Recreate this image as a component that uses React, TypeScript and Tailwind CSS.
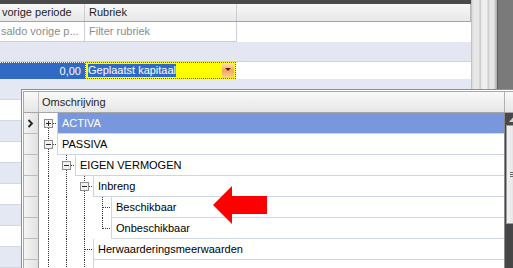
import React from 'react';

type Box = 'plus' | 'minus' | undefined;

interface TreeNode {
  label: string;
  guides: boolean[];
  box?: Box;
  first?: boolean;
  last?: boolean;
  selected?: boolean;
  current?: boolean;
}

const DOT = '#3a3a3a';

const nodes: TreeNode[] = [
  { label: 'ACTIVA', guides: [], box: 'plus', first: true, selected: true, current: true },
  { label: 'PASSIVA', guides: [], box: 'minus' },
  { label: 'EIGEN VERMOGEN', guides: [true], box: 'minus' },
  { label: 'Inbreng', guides: [true, true], box: 'minus' },
  { label: 'Beschikbaar', guides: [true, true, true] },
  { label: 'Onbeschikbaar', guides: [true, true, true], last: true },
  { label: 'Herwaarderingsmeerwaarden', guides: [true, true] },
  { label: '', guides: [true, true] },
];

const TreeCol: React.FC<{ up?: boolean; down?: boolean; right?: boolean; box?: Box }> = ({ up, down, right, box }) => (
  <svg width="18" height="21" className="block shrink-0">
    {up && <line x1="9.5" y1="0" x2="9.5" y2={box ? 6 : 11} stroke={DOT} strokeDasharray="1 1" />}
    {down && <line x1="9.5" y1={box ? 15 : 10} x2="9.5" y2="21" stroke={DOT} strokeDasharray="1 1" />}
    {right && <line x1={box ? 14 : 10} y1="10.5" x2="18" y2="10.5" stroke={DOT} strokeDasharray="1 1" />}
    {box && (
      <g>
        <rect x="5.5" y="6.5" width="8" height="8" fill="#f1f1f1" stroke="#8d8d8d" />
        <line x1="7" y1="10.5" x2="12" y2="10.5" stroke="#2a2a2a" />
        {box === 'plus' && <line x1="9.5" y1="8" x2="9.5" y2="13" stroke="#2a2a2a" />}
      </g>
    )}
  </svg>
);

const TreeRow: React.FC<{ node: TreeNode }> = ({ node }) => (
  <div className="flex h-[21px]">
    <div className="w-[15px] shrink-0 flex items-center justify-center border-r border-b border-r-[#9c9c9c] border-b-[#bdbdbd] bg-gradient-to-r from-[#f4f4f4] to-[#e2e2e2]">
      {node.current && (
        <svg width="7" height="9" className="block -ml-[2px]">
          <polyline points="1.5,1 5,4.5 1.5,8" fill="none" stroke="#222" strokeWidth="1.8" />
        </svg>
      )}
    </div>
    {node.guides.map((g, i) => (
      <TreeCol key={i} up={g} down={g} />
    ))}
    <TreeCol up={!node.first} down={!node.last} right box={node.box} />
    <div
      className={`flex-1 flex items-center pl-[4px] border-l border-b border-[#cdd5e2] whitespace-nowrap ${
        node.selected ? 'bg-[#7897dd] text-white' : 'bg-white text-black'
      }`}
    >
      {node.label}
    </div>
  </div>
);

const bgRows = ['bg-[#e4e8f2]', 'bg-white', 'bg-[#e4e8f2]', 'bg-white', 'bg-[#e4e8f2]', 'bg-white', 'bg-[#e4e8f2]', 'bg-white', 'bg-[#e4e8f2]'];

export default function App() {
  return (
    <div className="relative w-[513px] h-[268px] overflow-hidden bg-white font-['Liberation_Sans',Arial,sans-serif] text-[11px] text-black">
      <div className="flex h-full">
        {/* grid behind the dropdown */}
        <div className="w-[471px] shrink-0 flex flex-col">
          <div className="h-[5px] bg-[#4b4b4b]" />
          <div className="flex h-[19px] border-b border-[#a5a5a5] bg-gradient-to-b from-[#f8f8f8] to-[#e8e8e8] text-[#1e1e1e]">
            <div className="w-[85px] flex items-center pl-[2px] border-r border-[#cfcfcf] whitespace-nowrap">vorige periode</div>
            <div className="w-[152px] flex items-center pl-[4px] border-r border-[#cfcfcf]">Rubriek</div>
            <div className="flex-1 border-r border-[#b8b8b8]" />
          </div>
          <div className="flex h-[24px] text-[#8c8c8c]">
            <div className="w-[85px] flex items-center pl-[1px] border-r border-b border-[#c9cfd9] whitespace-nowrap">saldo vorige p...</div>
            <div className="w-[152px] flex items-center pl-[4px] border-r border-b border-[#c9cfd9]">Filter rubriek</div>
          </div>
          <div className="h-[22px] bg-[#e4e7f1] border-b border-[#cdd3df]" />
          <div className="flex h-[20px]">
            <div className="w-[85px] flex items-center justify-end pr-[4px] bg-[#316ac5] text-white border-t border-dotted border-white">
              0,00
            </div>
            <div className="w-[151px] flex border border-dotted border-[#2f5fd0] bg-[#ffff00]">
              <div className="flex-1 flex items-center pl-[2px]">
                <span className="bg-[#3169c6] text-white leading-[13px]">Geplaatst kapitaal</span>
              </div>
              <div className="w-[12px] my-[0px] mr-[1px] flex items-center justify-center bg-gradient-to-b from-[#fde2b8] via-[#f5a65a] to-[#fbd09c]">
                <svg width="6" height="4" className="block">
                  <polygon points="0,0 6,0 3,3" fill="#3a2a1a" />
                </svg>
              </div>
            </div>
          </div>
          {bgRows.map((c, i) => (
            <div key={i} className={`h-[21px] shrink-0 border-b border-[#d2d8e3] ${c}`} />
          ))}
        </div>
        {/* vertical scroll strip of the grid */}
        <div className="flex-1 flex">
          <div className="w-[26px] bg-[linear-gradient(to_right,#a9a9a9_0px,#dadada_1px,#e8e8e8_3px,#e8e8e8_8px,#c6c6c6_9px,#efefef_11px,#efefef_16px,#c9c9c9_17px,#e6e6e6_19px,#e6e6e6_23px,#b4b4b4_25px)]" />
          <div className="flex-1 bg-[#7a7a7a] border-l border-[#5e5e5e]" />
        </div>
      </div>

      {/* dropdown popup */}
      <div className="absolute left-[21px] top-[89px] w-[500px] h-[200px] border-l border-t border-[#8f8f8f] bg-white pl-[1px] pt-[1px]">
        <div className="h-full flex flex-col border-l border-t border-[#a9a9a9]">
          <div className="flex h-[21px] shrink-0 border-b border-[#a6a6a6] bg-gradient-to-b from-[#f9f9f9] to-[#e6e6e6] text-[#1e1e1e]">
            <div className="w-[15px] border-r border-[#c3c3c3]" />
            <div className="flex-1 flex items-center pl-[3px]">Omschrijving</div>
            <div className="w-[17px] border-l border-[#b0b0b0]" />
          </div>
          <div className="flex flex-1">
            <div className="flex-1 flex flex-col">
              {nodes.map((n, i) => (
                <TreeRow key={i} node={n} />
              ))}
            </div>
            <div className="w-[17px] flex flex-col bg-[#474747] border-l border-[#8a8a8a]">
              <div className="h-[12px] flex items-center justify-center bg-[#4a4a4a]">
                <svg width="9" height="5" className="block">
                  <polygon points="0,5 4.5,0 9,5" fill="#d6d6d6" />
                </svg>
              </div>
              <div className="h-[99px] mx-[1px] flex flex-col items-center justify-center gap-[1px] bg-gradient-to-r from-[#f2f2f2] to-[#d9d9d9] border border-[#9e9e9e]">
                <div className="w-[7px] h-px bg-[#6a6a6a]" />
                <div className="w-[7px] h-px bg-[#6a6a6a]" />
                <div className="w-[7px] h-px bg-[#6a6a6a]" />
              </div>
            </div>
          </div>
        </div>
      </div>

      {/* red arrow */}
      <svg width="56" height="40" className="absolute left-[212px] top-[185px]">
        <polygon points="1,20 20,1 20,11 55,11 55,29 20,29 20,39" fill="#ff0000" />
      </svg>
    </div>
  );
}
